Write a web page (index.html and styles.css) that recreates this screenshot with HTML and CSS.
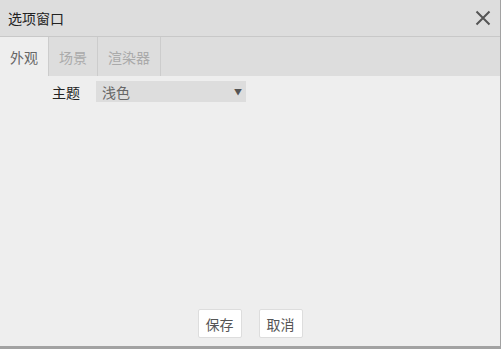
FILE: index.html
```html
<!DOCTYPE html>
<html lang="zh">

<head>
    <meta charset="UTF-8">
    <meta name="viewport" content="width=device-width, initial-scale=1.0">
    <title>选项窗口</title>
    <link rel="stylesheet" href="styles.css">
</head>

<body>
    <div class="dialog">
        <div class="dialog-title">
            <span>选项窗口</span>
            <svg class="close" width="16" height="16" viewBox="0 0 16 16">
                <path d="M1.5 1.5 L14.5 14.5 M14.5 1.5 L1.5 14.5" stroke="#555" stroke-width="2" fill="none"/>
            </svg>
        </div>

        <div class="tabs">
            <div class="tab active">外观</div>
            <div class="tab">场景</div>
            <div class="tab">渲染器</div>
        </div>

        <div class="dialog-body">
            <div class="form-row">
                <label>主题</label>
                <div class="select">
                    <span>浅色</span>
                    <span class="arrow">▼</span>
                </div>
            </div>
        </div>

        <div class="dialog-footer">
            <button>保存</button>
            <button>取消</button>
        </div>
    </div>
</body>

</html>
```

FILE: styles.css
```css
body {
    margin: 0;
    background-color: #a2a2a2;
    font-family: "Noto Sans CJK SC", "Noto Sans", sans-serif;
    font-size: 14px;
}

.dialog {
    width: 500px;
    height: 346px;
    background-color: #eee;
    display: flex;
    flex-direction: column;
}

.dialog-title {
    height: 36px;
    background-color: #ddd;
    border-bottom: 1px solid #c8c8c8;
    display: flex;
    align-items: center;
    justify-content: space-between;
    padding: 0 8px;
    color: #222;
}

.close {
    margin-right: 1px;
}

.tabs {
    height: 39px;
    background-color: #ddd;
    display: flex;
}

.tab {
    padding: 0 10px;
    border-right: 1px solid #ccc;
    display: flex;
    align-items: center;
    color: #aaa;
}

.tab.active {
    background-color: #eee;
    color: #666;
}

.dialog-body {
    flex: 1;
    padding: 5px 0 0 52px;
}

.form-row {
    display: flex;
    align-items: center;
    gap: 16px;
}

label {
    color: #222;
}

.select {
    width: 140px;
    height: 21px;
    background-color: #ddd;
    color: #666;
    display: flex;
    align-items: center;
    justify-content: space-between;
    padding: 0 4px 0 6px;
}

.arrow {
    font-size: 8px;
    color: #555;
}

.dialog-footer {
    display: flex;
    justify-content: center;
    gap: 17px;
    padding-bottom: 8px;
}

button {
    height: 29px;
    padding: 0 7px;
    background-color: #fff;
    border: 1px solid #ddd;
    border-radius: 2px;
    color: #555;
    font-family: inherit;
    font-size: 14px;
}
```
